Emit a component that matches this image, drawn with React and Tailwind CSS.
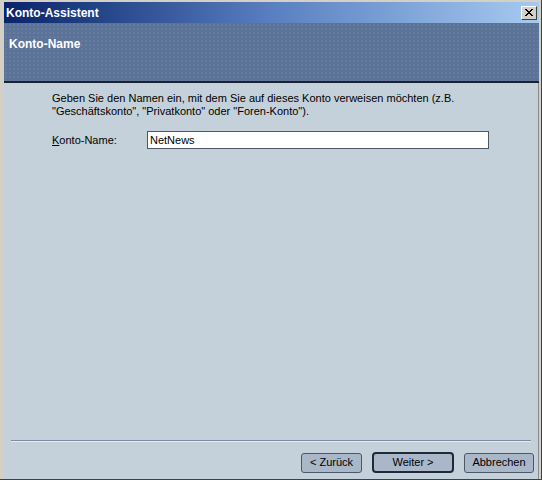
import { useState } from "react"

const font = { fontFamily: "Tahoma, 'Liberation Sans', Arial, sans-serif" }

function WizButton({ children, primary, width }) {
    return (
        <button
            className={
                (primary
                    ? "h-[21px] rounded-[4px] border-2 border-[#1e2a38] "
                    : "h-[20px] rounded-[3px] border border-[#4b5868] ") +
                "bg-[#aab7c8] text-[11px] text-black " +
                width
            }
        >
            {children}
        </button>
    )
}

export default function App() {
    const [name, setName] = useState("NetNews")

    return (
        <div
            style={font}
            className="w-[542px] h-[480px] bg-[#404040]"
        >
            <div className="flex h-[479px] w-[541px] flex-col border-l border-t border-[#d4d0c8] bg-[#d4d0c8] pl-[3px] pr-[2px] pt-[1px]">
                {/* title bar */}
                <div className="flex h-[21px] items-center justify-between bg-gradient-to-r from-[#0a246a] via-[#5a7fc0] to-[#a6caf0] pl-[2px] pr-[2px]">
                    <span className="text-[12px] font-bold text-white">
                        Konto-Assistent
                    </span>
                    <div className="flex h-[14px] w-[16px] items-center justify-center border border-t-white border-l-white border-r-[#404040] border-b-[#404040] bg-[#d4d0c8]">
                        <svg width="8" height="7" viewBox="0 0 8 7">
                            <path d="M0 0 L7 7 M1 0 L8 7 M7 0 L0 7 M8 0 L1 7" stroke="black" strokeWidth="1" />
                        </svg>
                    </div>
                </div>

                {/* header */}
                <div
                    className="h-[60px] border-b-2 border-[#1a2230] bg-[#5b7396] pl-[5px] pt-[12px]"
                    style={{
                        backgroundImage:
                            "radial-gradient(circle, #6f86aa 0.6px, transparent 0.8px)",
                        backgroundSize: "4px 4px",
                    }}
                >
                    <h1 className="text-[12px] font-bold text-white">
                        Konto-Name
                    </h1>
                </div>

                {/* body */}
                <div className="flex flex-1 flex-col border-r border-[#8a8a8a] bg-[#c4d1db]">
                    <div className="flex-1 pl-[48px] pr-[30px] pt-[9px]">
                        <p className="text-[11px] leading-[13px] text-black">
                            Geben Sie den Namen ein, mit dem Sie auf dieses Konto verweisen möchten (z.B.
                            <br />
                            "Geschäftskonto", "Privatkonto" oder "Foren-Konto").
                        </p>

                        <div className="mt-[13px] flex items-center">
                            <label className="w-[95px] text-[11px] text-black">
                                <span className="underline">K</span>onto-Name:
                            </label>
                            <input
                                value={name}
                                onChange={(e) => setName(e.target.value)}
                                className="h-[18px] w-[342px] border border-[#4b5868] bg-white px-[2px] text-[11px] text-black outline-none"
                            />
                        </div>
                    </div>

                    <div className="mx-[7px] h-[2px] border-t border-[#7d8b9e] border-b border-b-[#e6ecf1]" />

                    <div className="flex items-center justify-end gap-[10px] pb-[6px] pr-[4px] pt-[10px]">
                        <WizButton width="w-[61px]">&lt; Zurück</WizButton>
                        <WizButton primary width="w-[82px]">Weiter &gt;</WizButton>
                        <WizButton width="w-[70px]">Abbrechen</WizButton>
                    </div>
                </div>
            </div>
        </div>
    )
}
